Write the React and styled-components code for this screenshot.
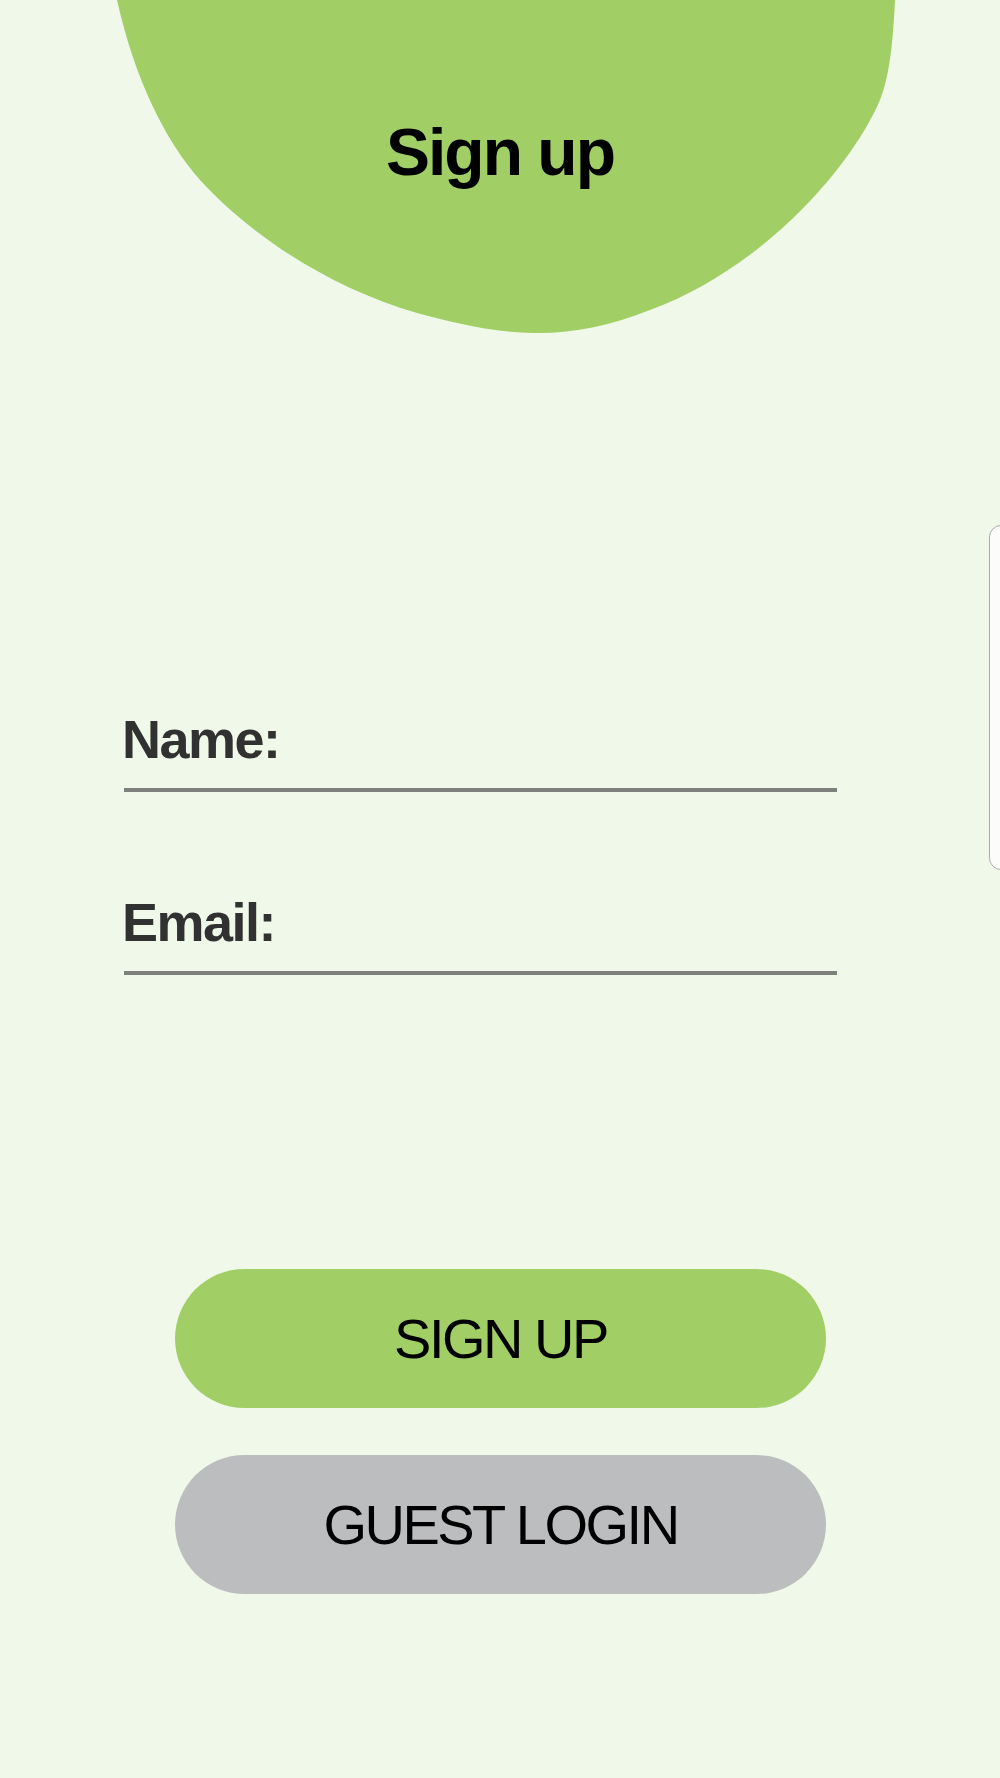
import styled, { createGlobalStyle } from 'styled-components';

const GlobalStyle = createGlobalStyle`
    html, body {
        margin: 0;
        padding: 0;
        background: #f0f8ea;
    }
    body {
        font-family: "Liberation Sans", Arial, sans-serif;
    }
`;

const StyledPage = styled.div`
    min-height: 1778px;
    background: #f0f8ea;
    overflow: hidden;
`;

const StyledHeader = styled.header`
    position: relative;
    height: 335px;
    box-sizing: border-box;
    padding-top: 114px;
`;

const StyledBlob = styled.svg`
    position: absolute;
    inset: 0;
    width: 1000px;
    height: 335px;
`;

const StyledTitle = styled.h2`
    position: relative;
    margin: 0;
    text-align: center;
    font-size: 66px;
    font-weight: 700;
    letter-spacing: -2px;
    color: #000;
`;

const StyledForm = styled.form`
    display: flex;
    flex-direction: column;
    padding: 373px 0 0 122px;
`;

const StyledField = styled.div`
    display: flex;
    flex-direction: column;
    width: 715px;
    margin-top: ${(props) => props.$gap || 0}px;
`;

const StyledLabel = styled.label`
    font-size: 54px;
    font-weight: 700;
    letter-spacing: -1.5px;
    color: #313131;
`;

const StyledInput = styled.input`
    height: 18px;
    margin: 0 0 0 2px;
    padding: 0;
    border: none;
    border-bottom: 4px solid #7e807e;
    background: transparent;
    outline: none;
    font: inherit;
`;

const StyledActions = styled.div`
    display: flex;
    flex-direction: column;
    gap: 47px;
    margin: 294px 0 0 53px;
`;

const StyledButton = styled.button`
    width: 651px;
    height: 139px;
    border: none;
    border-radius: 70px;
    background: ${(props) => (props.$variant === 'guest' ? '#bcbdbf' : '#a2cf65')};
    font-family: "Liberation Sans", Arial, sans-serif;
    font-size: 56px;
    letter-spacing: -2.5px;
    color: #000;
    cursor: pointer;
`;

const StyledSideTab = styled.div`
    position: absolute;
    left: 989px;
    top: 525px;
    width: 40px;
    height: 345px;
    box-sizing: border-box;
    border: 1.5px solid #ababab;
    border-radius: 12px;
    background: #fcfdfa;
`;

const App = () => {
    return (
        <StyledPage>
            <GlobalStyle />
            <StyledHeader>
                <StyledBlob viewBox="0 0 1000 335" aria-hidden="true">
                    <path
                        d="M117 0 L895 0 C893 40 890 75 880 100 C850 170 760 270 650 310 C610 326 570 334 533 333 C490 332 450 322 417 313 C330 288 250 235 200 180 C165 140 135 80 117 0 Z"
                        fill="#a2cf65"
                    />
                </StyledBlob>
                <StyledTitle>Sign up</StyledTitle>
            </StyledHeader>
            <StyledForm onSubmit={(e) => e.preventDefault()}>
                <StyledField>
                    <StyledLabel htmlFor="name">Name:</StyledLabel>
                    <StyledInput id="name" type="text" />
                </StyledField>
                <StyledField $gap={99}>
                    <StyledLabel htmlFor="email">Email:</StyledLabel>
                    <StyledInput id="email" type="email" />
                </StyledField>
                <StyledActions>
                    <StyledButton type="submit">SIGN UP</StyledButton>
                    <StyledButton type="button" $variant="guest">GUEST LOGIN</StyledButton>
                </StyledActions>
            </StyledForm>
            <StyledSideTab />
        </StyledPage>
    );
};

export default App;
